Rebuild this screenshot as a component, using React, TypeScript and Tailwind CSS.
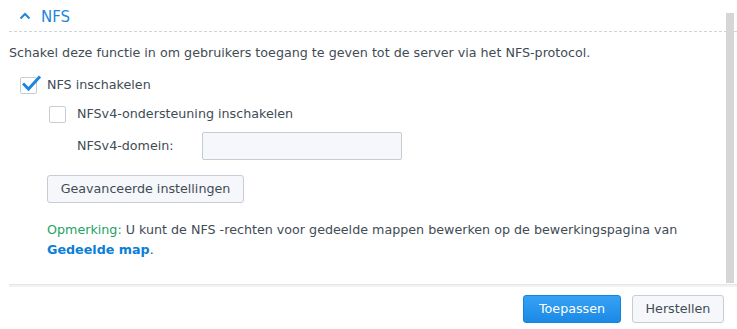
import React from 'react';

const font = { fontFamily: '"DejaVu Sans", Verdana, sans-serif' };

function Check({ checked }: { checked?: boolean }) {
  return (
    <div className="relative h-[17px] w-[17px] shrink-0 rounded-[2px] border border-[#c5ccd3] bg-white">
      {checked && (
        <svg className="absolute left-[1px] top-[-3px]" width="19" height="17" viewBox="0 0 19 17">
          <path d="M2 9.5 L6.5 14 L17 2.5" fill="none" stroke="#1a86e0" strokeWidth="3" strokeLinecap="square" />
        </svg>
      )}
    </div>
  );
}

export default function App() {
  return (
    <div className="relative h-[329px] w-[737px] overflow-hidden bg-white text-[12.7px] text-[#414b55]" style={font}>
      <div className="flex h-[284px] flex-col">
        <div className="ml-[9px] flex h-[32px] items-center border-b border-dashed border-[#c9d6dd] pl-[10px] pt-[2px]">
          <svg width="12" height="8" viewBox="0 0 12 8" className="mt-[-1px]">
            <path d="M1.5 6.5 L6 2 L10.5 6.5" fill="none" stroke="#1e87d9" strokeWidth="2" />
          </svg>
          <span className="ml-[10px] text-[15px] leading-[20px] text-[#1e87d9]">NFS</span>
        </div>

        <p className="ml-[9px] mt-[11px] leading-[20px]">
          Schakel deze functie in om gebruikers toegang te geven tot de server via het NFS-protocol.
        </p>

        <div className="ml-[20px] mt-[12px] flex h-[20px] items-center gap-[10px]">
          <Check checked />
          <span>NFS inschakelen</span>
        </div>

        <div className="ml-[49px] mt-[9px] flex h-[20px] items-center gap-[11px]">
          <Check />
          <span>NFSv4-ondersteuning inschakelen</span>
        </div>

        <div className="ml-[77px] mt-[8px] flex h-[28px] items-center">
          <span className="w-[125px]">NFSv4-domein:</span>
          <div className="h-[28px] w-[200px] rounded-[2px] border border-[#c5ccd3] bg-[#f5f7fa]" />
        </div>

        <button className="ml-[47px] mt-[15px] h-[28px] w-[197px] rounded-[3px] border border-[#c5ccd3] bg-[#f5f7fa] text-[12.7px] text-[#414b55]">
          Geavanceerde instellingen
        </button>

        <div className="ml-[47px] mt-[17px] leading-[20px]">
          <div>
            <span className="text-[#1ea362]">Opmerking:</span> U kunt de NFS -rechten voor gedeelde mappen bewerken op de bewerkingspagina van
          </div>
          <div>
            <span className="font-bold text-[#0b7ed8]">Gedeelde map</span>.
          </div>
        </div>
      </div>

      <div className="ml-[9px] h-[3px] border-t border-[#e6e6e6] bg-[#f2f2f2]" />

      <div className="mt-[8px] flex justify-end gap-[11px] pr-[13px]">
        <button className="h-[28px] w-[98px] rounded-[3px] border border-[#1683dc] bg-gradient-to-b from-[#35a2f4] to-[#1b8ae6] text-[12.7px] text-white">
          Toepassen
        </button>
        <button className="h-[28px] w-[92px] rounded-[3px] border border-[#c5ccd3] bg-[#f5f7fa] text-[12.7px] text-[#414b55]">
          Herstellen
        </button>
      </div>

      <div className="absolute left-[726px] top-[13px] h-[270px] w-[8px] bg-[#d6d6d6]" />
    </div>
  );
}
